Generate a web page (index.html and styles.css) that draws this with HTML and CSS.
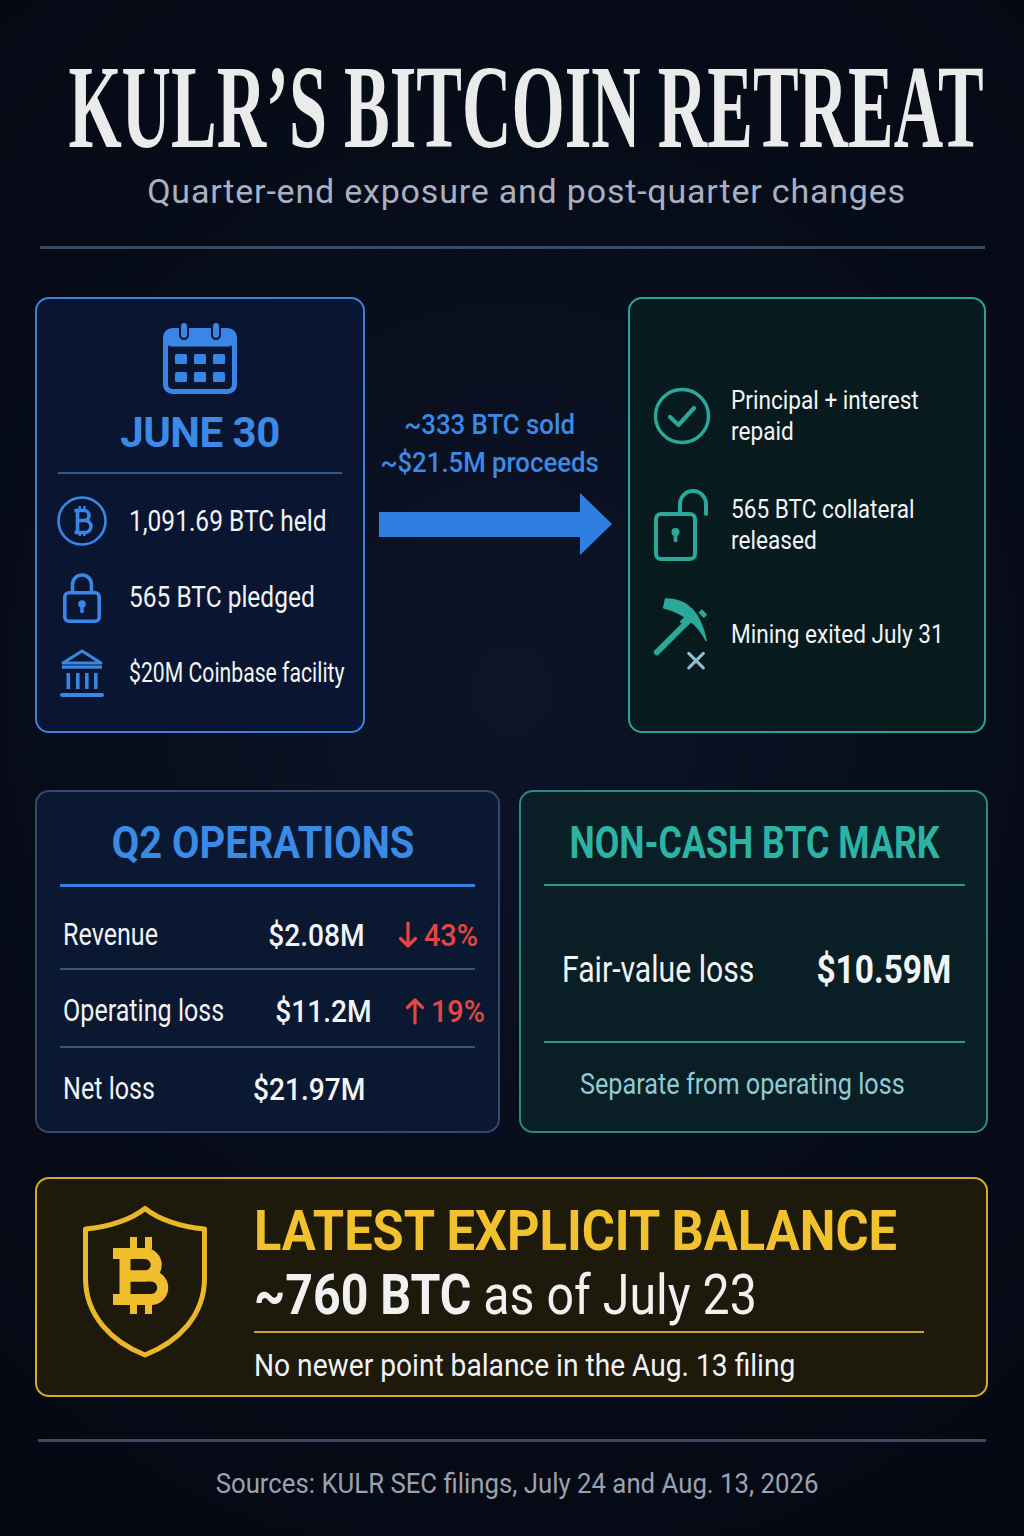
FILE: index.html
```html
<!DOCTYPE html>
<html lang="en">
<head>
<meta charset="utf-8">
<title>KULR's Bitcoin Retreat</title>
<link rel="stylesheet" href="styles.css">
</head>
<body>
<div class="page">
  <header class="hdr">
    <div class="title-wrap"><h1 class="title">KULR’S BITCOIN RETREAT</h1></div>
    <p class="subtitle">Quarter-end exposure and post-quarter changes</p>
  </header>
  <hr class="rule rule-top">

  <section class="top-row">
    <div class="card card-june">
      <svg class="cal" viewBox="0 0 76 74" width="76" height="74">
        <rect x="3.5" y="9.5" width="69" height="61" rx="7" fill="none" stroke="#3a86e6" stroke-width="5"/>
        <rect x="3.5" y="9.5" width="69" height="16" rx="6" fill="#3a86e6"/>
        <rect x="18" y="1" width="8" height="17" rx="4" fill="#3a86e6" stroke="#0a1631" stroke-width="2"/>
        <rect x="50" y="1" width="8" height="17" rx="4" fill="#3a86e6" stroke="#0a1631" stroke-width="2"/>
        <rect x="13" y="33" width="12" height="10" rx="1.5" fill="#3a86e6"/>
        <rect x="32" y="33" width="12" height="10" rx="1.5" fill="#3a86e6"/>
        <rect x="51" y="33" width="12" height="10" rx="1.5" fill="#3a86e6"/>
        <rect x="13" y="51" width="12" height="10" rx="1.5" fill="#3a86e6"/>
        <rect x="32" y="51" width="12" height="10" rx="1.5" fill="#3a86e6"/>
        <rect x="51" y="51" width="12" height="10" rx="1.5" fill="#3a86e6"/>
      </svg>
      <h2 class="june">JUNE 30</h2>
      <hr class="sep sep-june">
      <ul class="facts">
        <li class="fact">
          <span class="ficon">
            <svg viewBox="0 0 52 52" width="52" height="52">
              <circle cx="26" cy="26" r="23.5" fill="none" stroke="#3a86e6" stroke-width="2.6"/>
              <g fill="none" stroke="#3a86e6" stroke-width="3.6">
                <path d="M18.5 15.5 H28 a5 5 0 0 1 0 10 H21.5 M21.5 13.8 V38.2 M21.5 25.5 H29 a6 6 0 0 1 0 12 H18.5"/>
                <path d="M23.8 11 V15 M28.4 11 V15 M23.8 37 V41 M28.4 37 V41" stroke-width="2.4"/>
              </g>
            </svg>
          </span>
          <span class="ftext">1,091.69 BTC held</span>
        </li>
        <li class="fact">
          <span class="ficon">
            <svg viewBox="0 0 40 54" width="40" height="54">
              <path d="M10.5 23 V14.5 a9.5 9.5 0 0 1 19 0 V23" fill="none" stroke="#3a86e6" stroke-width="3.6"/>
              <rect x="2.8" y="22.8" width="34.4" height="28.4" rx="4" fill="none" stroke="#3a86e6" stroke-width="3.6"/>
              <circle cx="20" cy="34" r="3.8" fill="#3a86e6"/>
              <rect x="18.2" y="35" width="3.6" height="8" rx="1" fill="#3a86e6"/>
            </svg>
          </span>
          <span class="ftext">565 BTC pledged</span>
        </li>
        <li class="fact">
          <span class="ficon">
            <svg viewBox="0 0 48 52" width="48" height="52">
              <path d="M5 16 L24 4 L43 16 Z" fill="none" stroke="#3a86e6" stroke-width="3.2" stroke-linejoin="round"/>
              <rect x="4" y="18.5" width="40" height="3.2" fill="#3a86e6"/>
              <rect x="8.5" y="26" width="3.6" height="16" fill="#3a86e6"/>
              <rect x="18" y="26" width="3.6" height="16" fill="#3a86e6"/>
              <rect x="27" y="26" width="3.6" height="16" fill="#3a86e6"/>
              <rect x="36" y="26" width="3.6" height="16" fill="#3a86e6"/>
              <rect x="2" y="46" width="44" height="4" rx="2" fill="#3a86e6"/>
            </svg>
          </span>
          <span class="ftext ftext-tight">$20M Coinbase facility</span>
        </li>
      </ul>
    </div>

    <div class="flow">
      <p class="flow-text">~333 BTC sold<br>~$21.5M proceeds</p>
      <svg class="arrow" viewBox="0 0 233 62" width="233" height="62">
        <rect x="0" y="19" width="203" height="25" fill="#2f7fe2"/>
        <polygon points="201,0 233,31 201,62" fill="#2f7fe2"/>
      </svg>
    </div>

    <div class="card card-after">
      <div class="titem">
        <span class="ticon">
          <svg viewBox="0 0 58 58" width="58" height="58">
            <circle cx="29" cy="29" r="26.5" fill="none" stroke="#2aa899" stroke-width="3.4"/>
            <path d="M17 30 L25.5 38 L41 21" fill="none" stroke="#2aa899" stroke-width="4.2" stroke-linecap="round" stroke-linejoin="round"/>
          </svg>
        </span>
        <span class="ttext">Principal + interest<br>repaid</span>
      </div>
      <div class="titem">
        <span class="ticon">
          <svg viewBox="0 0 58 74" width="58" height="74">
            <path d="M27 26 V16 a13 13 0 0 1 26 0 V26" fill="none" stroke="#2aa899" stroke-width="4" stroke-linecap="round"/>
            <rect x="3" y="26" width="39" height="45" rx="5" fill="none" stroke="#2aa899" stroke-width="4"/>
            <circle cx="22.5" cy="44" r="4" fill="#2aa899"/>
            <rect x="20.6" y="45" width="3.8" height="9" rx="1" fill="#2aa899"/>
          </svg>
        </span>
        <span class="ttext">565 BTC collateral<br>released</span>
      </div>
      <div class="titem">
        <span class="ticon">
          <svg viewBox="0 0 66 76" width="66" height="76">
            <path d="M7 57 L38 26" fill="none" stroke="#2aa899" stroke-width="6" stroke-linecap="round"/>
            <rect x="32" y="20" width="11" height="9" rx="1" fill="#2aa899" transform="rotate(-45 37.5 24.5)"/>
            <path d="M16 2 Q49 1 58 45 Q45 19 14 11 Z" fill="#2aa899" stroke="#2aa899" stroke-width="1.5" stroke-linejoin="round"/>
            <rect x="52" y="13" width="5" height="8" rx="1" fill="#2aa899" transform="rotate(-45 54.5 17)"/>
            <path d="M40 58 L55 73 M55 58 L40 73" stroke="#8fbdd0" stroke-width="3.2" stroke-linecap="round"/>
          </svg>
        </span>
        <span class="ttext">Mining exited July 31</span>
      </div>
    </div>
  </section>

  <section class="mid-row">
    <div class="card card-ops">
      <h2 class="panel-title ops-title">Q2 OPERATIONS</h2>
      <hr class="sep sep-ops">
      <div class="ops-row ops-row-first">
        <span class="ops-label">Revenue</span>
        <span class="ops-value">$2.08M</span>
        <span class="ops-change">
          <svg viewBox="0 0 20 28" width="20" height="28"><path d="M10 2 V25 M2.5 17.5 L10 25 L17.5 17.5" fill="none" stroke="#e5463f" stroke-width="3.2" stroke-linecap="round" stroke-linejoin="round"/></svg>
          <span class="pct">43%</span>
        </span>
      </div>
      <hr class="sep sep-row">
      <div class="ops-row">
        <span class="ops-label">Operating loss</span>
        <span class="ops-value">$11.2M</span>
        <span class="ops-change">
          <svg viewBox="0 0 20 28" width="20" height="28"><path d="M10 26 V3 M2.5 10.5 L10 3 L17.5 10.5" fill="none" stroke="#e5463f" stroke-width="3.2" stroke-linecap="round" stroke-linejoin="round"/></svg>
          <span class="pct">19%</span>
        </span>
      </div>
      <hr class="sep sep-row">
      <div class="ops-row">
        <span class="ops-label">Net loss</span>
        <span class="ops-value">$21.97M</span>
        <span class="ops-change"></span>
      </div>
    </div>

    <div class="card card-mark">
      <h2 class="panel-title mark-title">NON-CASH BTC MARK</h2>
      <hr class="sep sep-teal">
      <div class="mark-row">
        <span class="mark-label">Fair-value loss</span>
        <span class="mark-value">$10.59M</span>
      </div>
      <hr class="sep sep-teal">
      <p class="mark-note">Separate from operating loss</p>
    </div>
  </section>

  <section class="card card-balance">
    <svg class="shield" viewBox="0 0 126 152" width="126" height="152">
      <path d="M63 2.5 C50 13 28 21 3.5 23 L3.5 72 C3.5 110 30 136 63 149 C96 136 122.5 110 122.5 72 L122.5 23 C98 21 76 13 63 2.5 Z" fill="none" stroke="#e9b62c" stroke-width="5" stroke-linejoin="round"/>
      <g fill="none" stroke="#f0bd2c" stroke-width="11">
        <path d="M31 47.5 H63 a11.25 11.25 0 0 1 0 22.5 H43"/>
        <path d="M43 70 H69 a11.75 11.75 0 0 1 0 23.5 H31"/>
        <path d="M43 42 V99"/>
      </g>
      <path d="M51.5 31 V43 M66.5 31 V43 M51.5 98 V108 M66.5 98 V108" stroke="#f0bd2c" stroke-width="7"/>
    </svg>
    <div class="bal-body">
      <h2 class="bal-title">LATEST EXPLICIT BALANCE</h2>
      <p class="bal-main"><b>~760 BTC</b> as of July 23</p>
      <hr class="sep sep-gold">
      <p class="bal-note">No newer point balance in the Aug. 13 filing</p>
    </div>
  </section>

  <hr class="rule rule-bottom">
  <p class="sources">Sources: KULR SEC filings, July 24 and Aug. 13, 2026</p>
</div>
</body>
</html>
```

FILE: styles.css
```css
* { box-sizing: border-box; }

html, body { margin: 0; padding: 0; }

body {
  width: 1024px;
  height: 1536px;
  overflow: hidden;
  background: radial-gradient(ellipse 80% 60% at 50% 45%, #0c1428 0%, #070c19 60%, #050914 100%);
  font-family: Roboto, "Liberation Sans", sans-serif;
  color: #f1f3f6;
}

.page {
  width: 988px;
  padding-left: 35px;
}

/* header */
.hdr { padding: 49px 0 0 30px; }

.title-wrap {
  display: flex;
  justify-content: center;
  height: 118px;
}

.title {
  flex: none;
  margin: 0;
  font: 700 118px/118px "Liberation Serif", "Times New Roman", serif;
  white-space: nowrap;
  color: #ebebeb;
  transform: scaleX(0.58);
}

.subtitle {
  margin: 4px 0 0;
  text-align: center;
  font-size: 34px;
  line-height: 40px;
  letter-spacing: 0.8px;
  color: #a8b1c3;
}

.rule {
  display: block;
  border: 0;
  height: 3px;
  background: #394a60;
}
.rule-top { margin: 35px 0 0 5px; width: 945px; }
.rule-bottom { margin: 42px 0 0 3px; width: 948px; }

.sep { display: block; border: 0; margin: 0; }

/* cards */
.card {
  border: 2px solid;
  border-radius: 14px;
}

.top-row {
  display: grid;
  grid-template-columns: 330px 263px 358px;
  height: 436px;
  margin-top: 48px;
}

.card-june {
  background: #0a1631;
  border-color: #3a80dc;
  padding: 22px 19px 0;
  display: flex;
  flex-direction: column;
  align-items: center;
}

.cal { display: block; }

.june {
  margin: 12px 0 0;
  font-size: 42px;
  line-height: 52px;
  font-weight: 700;
  letter-spacing: -0.5px;
  color: #3d8ae6;
}

.sep-june {
  align-self: stretch;
  height: 2px;
  margin: 13px 2px 0;
  background: #34588a;
}

.facts {
  list-style: none;
  margin: 9px 0 0;
  padding: 0;
  align-self: stretch;
}

.fact {
  height: 76px;
  display: flex;
  align-items: center;
  gap: 21px;
}

.ficon {
  flex: none;
  width: 52px;
  display: flex;
  justify-content: center;
}
.ficon svg { display: block; }

.ftext {
  font-size: 29px;
  line-height: 40px;
  white-space: nowrap;
  transform: scaleX(0.845);
  transform-origin: left center;
}
.ftext-tight {
  font-size: 28px;
  transform: scaleX(0.757);
}

/* flow arrow */
.flow {
  display: flex;
  flex-direction: column;
  padding-top: 109px;
}

.flow-text {
  margin: 0;
  padding-right: 15px;
  text-align: center;
  font-size: 28px;
  line-height: 38px;
  font-weight: 500;
  white-space: nowrap;
  color: #3b8ae6;
  transform: scaleX(0.92);
}

.arrow {
  display: block;
  margin: 11px 0 0 14px;
}

/* after card */
.card-after {
  background: #071a1e;
  border-color: #2aa396;
  padding: 72px 20px 0;
  display: flex;
  flex-direction: column;
  gap: 19px;
}

.titem {
  height: 90px;
  display: flex;
  align-items: center;
  gap: 17px;
}

.ticon {
  flex: none;
  width: 64px;
  display: flex;
  justify-content: center;
}
.ticon svg { display: block; }

.ttext {
  font-size: 26px;
  line-height: 31px;
  white-space: nowrap;
  transform: scaleX(0.87);
  transform-origin: left center;
}

/* middle row */
.mid-row {
  display: grid;
  grid-template-columns: 465px 469px;
  gap: 19px;
  height: 343px;
  margin-top: 57px;
}

.panel-title {
  display: flex;
  justify-content: center;
  margin: 0;
  line-height: 56px;
  font-weight: 700;
  white-space: nowrap;
}

.card-ops {
  background: #0b1832;
  border-color: #33486a;
  padding: 23px 23px 0;
}

.ops-title {
  font-size: 45px;
  color: #3a8ae6;
  padding-right: 10px;
  transform: scaleX(0.887);
}

.sep-ops {
  height: 3px;
  margin-top: 13px;
  background: #3583e0;
}

.sep-row {
  height: 2px;
  background: #36557a;
}

.ops-row {
  display: grid;
  grid-template-columns: auto 1fr 113px;
  align-items: center;
  padding: 21px 0 15px 3px;
  margin-right: -3px;
  line-height: 40px;
  white-space: nowrap;
}
.ops-row-first { padding-top: 28px; padding-bottom: 13px; }

.ops-label {
  font-size: 31px;
  transform: scaleX(0.81);
  transform-origin: left center;
}

.ops-value {
  font-size: 32px;
  font-weight: 500;
  text-align: right;
  transform: scaleX(0.88);
  transform-origin: right center;
}

.ops-change {
  display: flex;
  justify-content: flex-end;
  align-items: center;
  gap: 0;
  color: #e5463f;
}
.ops-change svg { display: block; }

.pct {
  font-size: 32px;
  font-weight: 500;
  transform: scaleX(0.9);
  transform-origin: right center;
}

.card-mark {
  background: #0a1e26;
  border-color: #2b8a83;
  padding: 23px 21px 0 23px;
}

.mark-title {
  font-size: 44px;
  color: #2db3a4;
  transform: scaleX(0.812);
}

.sep-teal {
  height: 2px;
  background: #2a9a8c;
}
.card-mark > .sep-teal:first-of-type { margin-top: 13px; }

.mark-row {
  display: flex;
  justify-content: space-between;
  align-items: center;
  padding: 64px 14px 51px 18px;
  line-height: 40px;
  white-space: nowrap;
}

.mark-label {
  font-size: 36px;
  transform: scaleX(0.838);
  transform-origin: left center;
}

.mark-value {
  font-size: 38px;
  font-weight: 700;
  transform: scaleX(0.88);
  transform-origin: right center;
}

.mark-note {
  margin: 0;
  padding: 21px 0 0 36px;
  font-size: 29px;
  line-height: 40px;
  white-space: nowrap;
  color: #8fcbd5;
  transform: scaleX(0.87);
  transform-origin: 36px center;
}

/* balance */
.card-balance {
  margin-top: 44px;
  height: 220px;
  background: #1d1a0b;
  border-color: #d6aa2b;
  display: flex;
  padding: 0 62px 0 45px;
  gap: 46px;
}

.shield {
  flex: none;
  display: block;
  margin-top: 27px;
}

.bal-body {
  flex: 1;
  min-width: 0;
  padding-top: 24px;
}

.bal-title {
  margin: 0;
  font-size: 55px;
  line-height: 56px;
  font-weight: 700;
  color: #f2c12e;
  white-space: nowrap;
  transform: scaleX(0.92);
  transform-origin: left center;
}

.bal-main {
  margin: 8px 0 0;
  font-size: 56px;
  line-height: 56px;
  color: #f1f1f1;
  white-space: nowrap;
  transform: scaleX(0.862);
  transform-origin: left center;
}
.bal-main b { font-weight: 700; }

.sep-gold {
  height: 2px;
  margin-top: 8px;
  background: #cda42a;
}

.bal-note {
  margin: 13px 0 0;
  font-size: 31px;
  line-height: 40px;
  white-space: nowrap;
  transform: scaleX(0.908);
  transform-origin: left center;
}

.sources {
  margin: 22px 0 0;
  padding-left: 12px;
  text-align: center;
  font-size: 28px;
  line-height: 40px;
  white-space: nowrap;
  color: #9aa2b1;
  transform: scaleX(0.92);
}
```
